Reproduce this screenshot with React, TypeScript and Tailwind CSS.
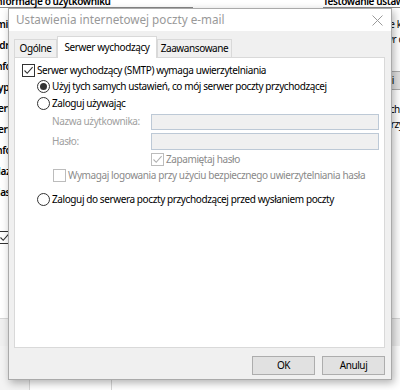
import React from 'react';

function CheckBox({ checked, disabled }: { checked?: boolean; disabled?: boolean }) {
  return (
    <span
      className={
        'flex h-[13px] w-[13px] shrink-0 items-center justify-center border bg-white ' +
        (disabled ? 'border-[#bcbcbc]' : 'border-[#333333]')
      }
    >
      {checked && (
        <svg width="11" height="11" viewBox="0 0 11 11">
          <path
            d="M1.5 5.5 L4.2 8.3 L9.6 2.2"
            fill="none"
            stroke={disabled ? '#b0b0b0' : '#333333'}
            strokeWidth="1.1"
          />
        </svg>
      )}
    </span>
  );
}

function Radio({ selected }: { selected?: boolean }) {
  return (
    <span className="flex h-[13px] w-[13px] shrink-0 items-center justify-center rounded-full border border-[#333333] bg-white">
      {selected && <span className="h-[7px] w-[7px] rounded-full bg-[#333333]" />}
    </span>
  );
}

function Tab({ label, active, width }: { label: string; active?: boolean; width: string }) {
  if (active) {
    return (
      <div
        className={`relative z-10 -mb-px flex h-[22px] ${width} shrink-0 items-start justify-center border border-b-0 border-[#d9d9d9] bg-white pt-[3px]`}
      >
        {label}
      </div>
    );
  }
  return (
    <div
      className={`flex h-[18px] ${width} shrink-0 items-center justify-center border border-b-0 border-[#d9d9d9] bg-[#f0f0f0]`}
    >
      {label}
    </div>
  );
}

const leftLabels = [
  'Imię i nazwisko:',
  'Adres e-mail:',
  'Informacje o serwerze',
  'Typ konta:',
  'Serwer poczty przychodzącej:',
  'Serwer poczty wychodzącej (SMTP):',
  'Informacje o logowaniu',
  'Nazwa użytkownika:',
  'Hasło:',
];

export default function App() {
  return (
    <div className="relative h-[390px] w-[400px] overflow-hidden whitespace-nowrap bg-white font-['Segoe_UI','Noto_Sans',sans-serif] text-[10px] tracking-[-0.4px] text-black">
      {/* background window */}
      <div className="flex h-full flex-col">
        <div className="flex h-[318px]">
          <div className="-ml-[7px] flex w-[200px] shrink-0 flex-col">
            <div className="-mt-[6px] h-[14px] border-b border-[#888] font-semibold leading-[14px]">
              Informacje o użytkowniku
            </div>
            <div className="flex flex-col gap-[6px] pt-[9px] font-semibold leading-[15px]">
              {leftLabels.map((l) => (
                <div key={l} className="h-[15px]">
                  {l}
                </div>
              ))}
            </div>
            <div className="mt-[30px] flex items-center gap-[3px] pl-[5px]">
              <CheckBox checked />
              <span>Wyślij</span>
            </div>
          </div>
          <div className="flex flex-1 flex-col items-start pl-[130px] leading-[15px]">
            <div className="-mt-[6px] h-[14px] border-b border-[#888] font-semibold leading-[14px]">
              Testowanie ustawień konta
            </div>
            <div className="mt-[9px] pl-[62px]">ze konta</div>
            <div className="pl-[62px]">wr danych</div>
            <div className="mt-[24px] flex h-[19px] w-[120px] shrink-0 items-center border border-[#adadad] bg-[#e1e1e1] pl-[62px]">
              ni
            </div>
            <div className="mt-[12px] pl-[62px]">vch</div>
            <div className="pl-[62px]">przy</div>
          </div>
        </div>
        <div className="h-[28px] shrink-0 border-t border-[#d6d6d6] bg-[#f0f0f0]" />
        <div className="flex flex-1">
          <div className="w-[30px] border-r border-[#d6d6d6] bg-[#f3f3f3]" />
          <div className="flex w-[82px] border-r border-[#d6d6d6] pl-[10px]">
            <div className="h-[20px] w-[3px] bg-[#0063b1]" />
            <span className="ml-[18px] mt-[1px] text-[12px] tracking-normal">Piotr Jast</span>
          </div>
        </div>
      </div>

      {/* dialog */}
      <div className="absolute left-[8px] top-[8px] flex h-[372px] w-[384px] flex-col border border-[#aaaaaa] bg-[#f0f0f0] shadow-[2px_3px_8px_rgba(0,0,0,0.3)]">
        <div className="flex h-[22px] shrink-0 items-center justify-between bg-white pl-[7px] pr-[8px] text-[11.7px] tracking-normal text-[#999999]">
          <span>Ustawienia internetowej poczty e-mail</span>
          <svg width="11" height="11" viewBox="0 0 11 11">
            <path d="M0.5 0.5 L10.5 10.5 M10.5 0.5 L0.5 10.5" stroke="#9a9a9a" strokeWidth="1" />
          </svg>
        </div>
        <div className="flex flex-1 flex-col pl-[5px] pr-[6px] pt-[5px]">
          <div className="flex h-[21px] shrink-0 items-end">
            <Tab label="Ogólne" width="w-[43px]" />
            <Tab label="Serwer wychodzący" width="w-[100px]" active />
            <Tab label="Zaawansowane" width="w-[75px]" />
          </div>
          <div className="flex h-[291px] shrink-0 flex-col border border-[#d9d9d9] bg-white pt-[4px]">
            <div className="flex h-[16px] items-center gap-[2px] pl-[7px]">
              <CheckBox checked />
              <span>Serwer wychodzący (SMTP) wymaga uwierzytelniania</span>
            </div>
            <div className="flex h-[16px] items-center gap-[2px] pl-[22px]">
              <Radio selected />
              <span>Użyj tych samych ustawień, co mój serwer poczty przychodzącej</span>
            </div>
            <div className="mt-[1px] flex h-[17px] items-center gap-[2px] pl-[22px]">
              <Radio />
              <span>Zaloguj używając</span>
            </div>
            <div className="mt-[1px] flex h-[17px] items-center pl-[37px]">
              <span className="w-[99px] shrink-0 text-[#a0a0a0]">Nazwa użytkownika:</span>
              <div className="h-[16px] w-[228px] shrink-0 border border-[#bdc9d6] bg-[#f0f0f0]" />
            </div>
            <div className="mt-[3px] flex h-[17px] items-center pl-[37px]">
              <span className="w-[99px] shrink-0 text-[#a0a0a0]">Hasło:</span>
              <div className="h-[17px] w-[228px] shrink-0 border border-[#bdc9d6] bg-[#f0f0f0]" />
            </div>
            <div className="mt-[2px] flex h-[15px] items-center gap-[2px] pl-[136px] text-[#8a8a8a]">
              <CheckBox checked disabled />
              <span>Zapamiętaj hasło</span>
            </div>
            <div className="flex h-[16px] items-center gap-[2px] pl-[38px] text-[#8a8a8a]">
              <CheckBox disabled />
              <span>Wymagaj logowania przy użyciu bezpiecznego uwierzytelniania hasła</span>
            </div>
            <div className="mt-[8px] flex h-[16px] items-center gap-[2px] pl-[22px]">
              <Radio />
              <span>Zaloguj do serwera poczty przychodzącej przed wysłaniem poczty</span>
            </div>
          </div>
          <div className="flex justify-end gap-[7px] pt-[8px]">
            <button className="flex h-[19px] w-[63px] items-center justify-center border border-[#adadad] bg-[#e1e1e1]">
              OK
            </button>
            <button className="flex h-[19px] w-[63px] items-center justify-center border border-[#adadad] bg-[#e1e1e1]">
              Anuluj
            </button>
          </div>
        </div>
      </div>
    </div>
  );
}
